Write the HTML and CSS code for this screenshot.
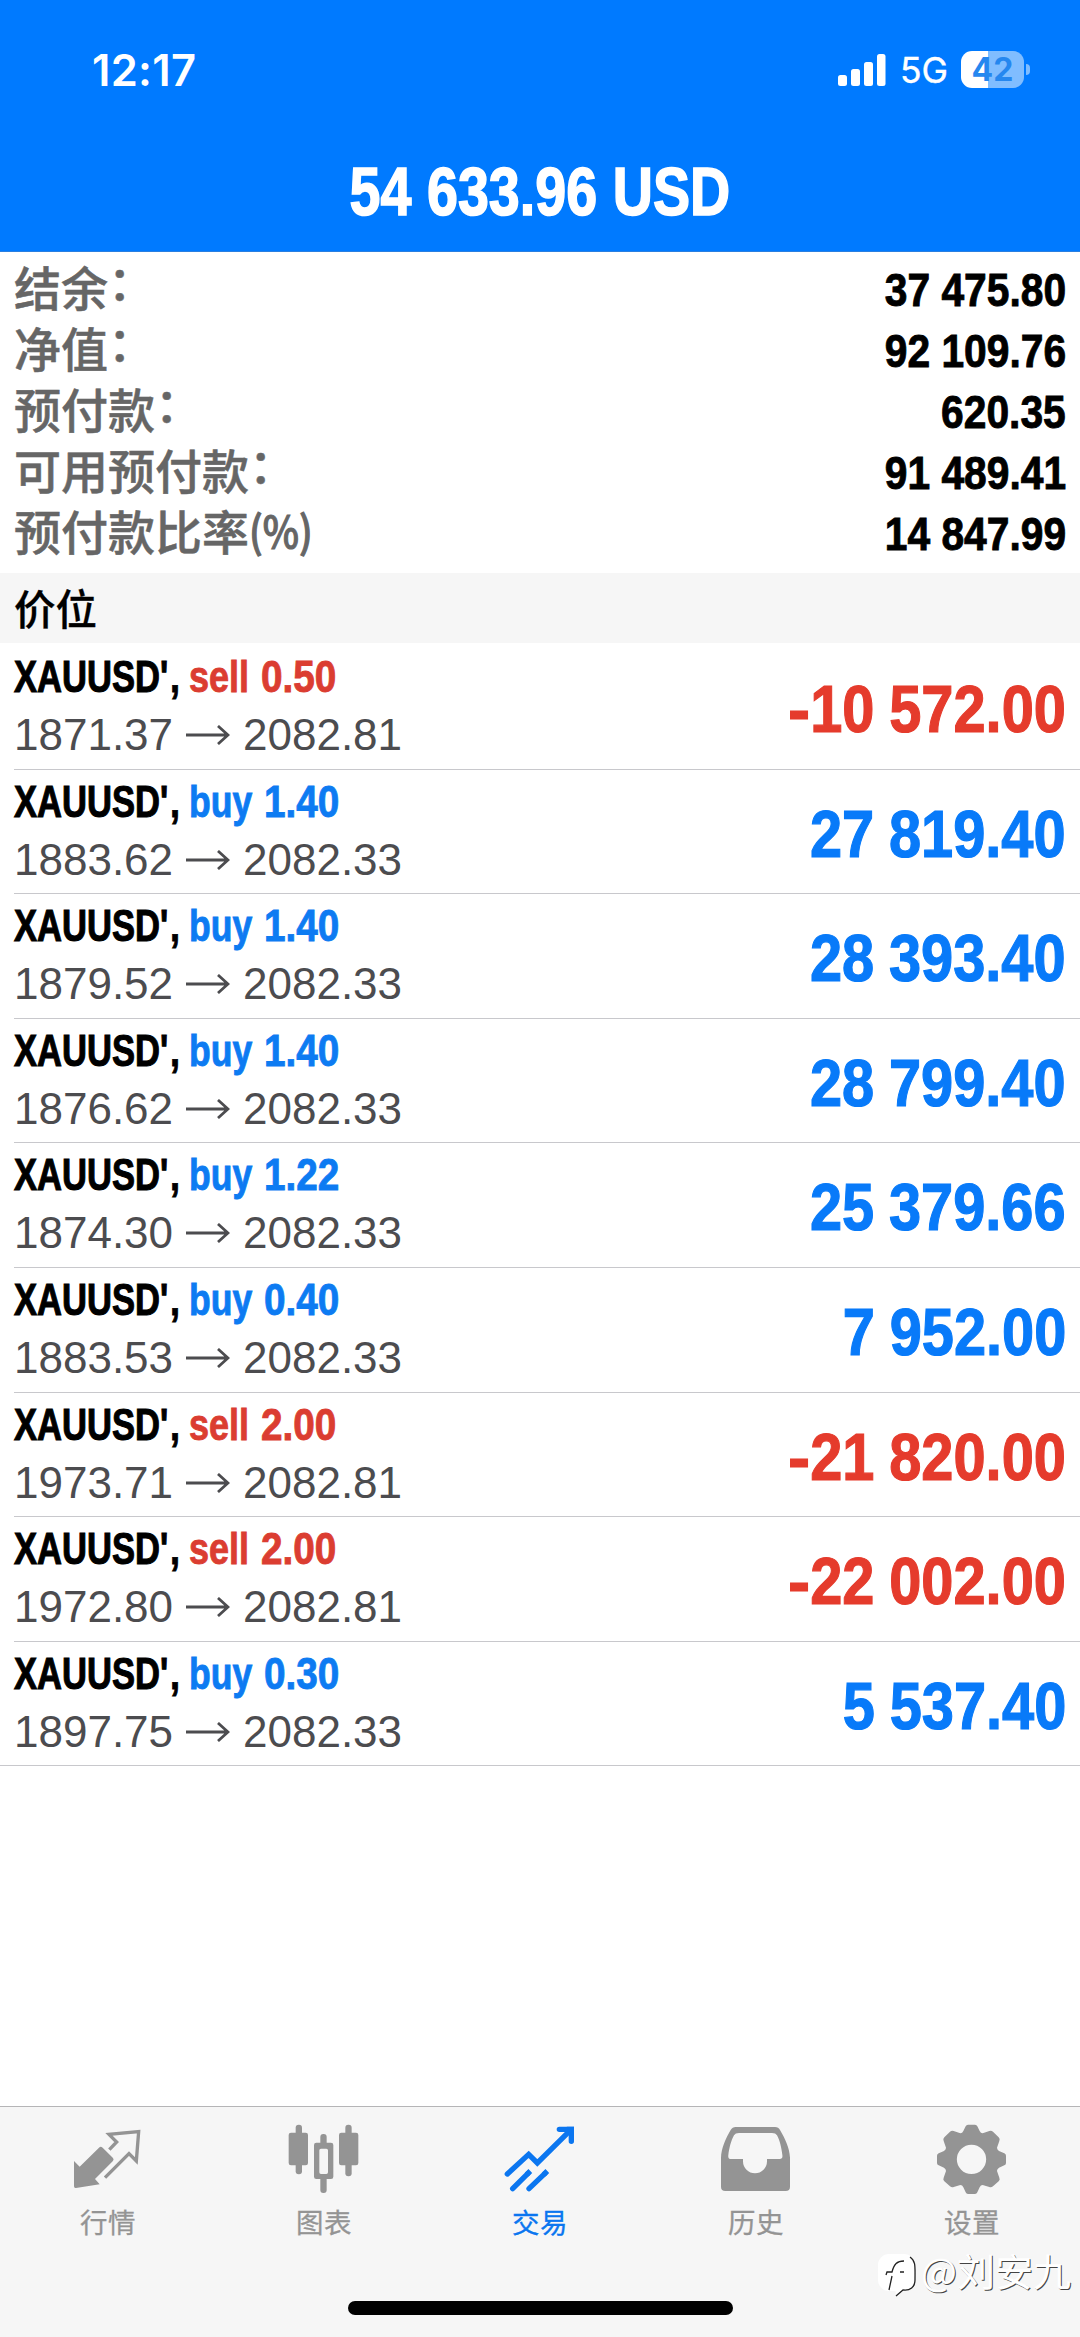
FILE: index.html
```html
<!DOCTYPE html>
<html lang="zh-CN">
<head>
<meta charset="utf-8">
<title>交易</title>
<link rel="stylesheet" href="styles.css">
</head>
<body>
<header class="top">
  <div class="status">
    <span class="time">12:17</span>
    <span class="status-icons">
      <svg class="signal" viewBox="0 0 48 34"><rect x="0" y="22" width="9" height="11" rx="2.5"/><rect x="13" y="16" width="9" height="17" rx="2.5"/><rect x="26" y="9" width="9" height="24" rx="2.5"/><rect x="39" y="1" width="8.5" height="32" rx="2.5"/></svg>
      <span class="network">5G</span>
      <span class="battery">42</span>
      <span class="battery-cap"></span>
    </span>
  </div>
  <h1 class="profit"><span>54 633.96 USD</span></h1>
</header>

<section class="summary">
  <div class="line"><span>结余<i class="colon">：</i></span><b>37 475.80</b></div>
  <div class="line"><span>净值<i class="colon">：</i></span><b>92 109.76</b></div>
  <div class="line"><span>预付款<i class="colon">：</i></span><b>620.35</b></div>
  <div class="line"><span>可用预付款<i class="colon">：</i></span><b>91 489.41</b></div>
  <div class="line"><span>预付款比率<i class="unit">(%)</i></span><b>14 847.99</b></div>
</section>

<h2 class="section">价位</h2>

<main class="positions">
  <article class="row sell"><div class="info"><div class="deal"><span class="sym">XAUUSD'</span><span class="comma">,</span><span class="side">sell</span><span class="vol">0.50</span></div><div class="prices"><span class="from">1871.37</span><svg class="arrow" viewBox="0 0 44 20"><path d="M0 10H42M32 1L42 10L32 19"/></svg><span>2082.81</span></div></div><b class="amount"><i>-</i>10 572.00</b></article>
  <article class="row buy"><div class="info"><div class="deal"><span class="sym">XAUUSD'</span><span class="comma">,</span><span class="side">buy</span><span class="vol">1.40</span></div><div class="prices"><span class="from">1883.62</span><svg class="arrow" viewBox="0 0 44 20"><path d="M0 10H42M32 1L42 10L32 19"/></svg><span>2082.33</span></div></div><b class="amount">27 819.40</b></article>
  <article class="row buy"><div class="info"><div class="deal"><span class="sym">XAUUSD'</span><span class="comma">,</span><span class="side">buy</span><span class="vol">1.40</span></div><div class="prices"><span class="from">1879.52</span><svg class="arrow" viewBox="0 0 44 20"><path d="M0 10H42M32 1L42 10L32 19"/></svg><span>2082.33</span></div></div><b class="amount">28 393.40</b></article>
  <article class="row buy"><div class="info"><div class="deal"><span class="sym">XAUUSD'</span><span class="comma">,</span><span class="side">buy</span><span class="vol">1.40</span></div><div class="prices"><span class="from">1876.62</span><svg class="arrow" viewBox="0 0 44 20"><path d="M0 10H42M32 1L42 10L32 19"/></svg><span>2082.33</span></div></div><b class="amount">28 799.40</b></article>
  <article class="row buy"><div class="info"><div class="deal"><span class="sym">XAUUSD'</span><span class="comma">,</span><span class="side">buy</span><span class="vol">1.22</span></div><div class="prices"><span class="from">1874.30</span><svg class="arrow" viewBox="0 0 44 20"><path d="M0 10H42M32 1L42 10L32 19"/></svg><span>2082.33</span></div></div><b class="amount">25 379.66</b></article>
  <article class="row buy"><div class="info"><div class="deal"><span class="sym">XAUUSD'</span><span class="comma">,</span><span class="side">buy</span><span class="vol">0.40</span></div><div class="prices"><span class="from">1883.53</span><svg class="arrow" viewBox="0 0 44 20"><path d="M0 10H42M32 1L42 10L32 19"/></svg><span>2082.33</span></div></div><b class="amount">7 952.00</b></article>
  <article class="row sell"><div class="info"><div class="deal"><span class="sym">XAUUSD'</span><span class="comma">,</span><span class="side">sell</span><span class="vol">2.00</span></div><div class="prices"><span class="from">1973.71</span><svg class="arrow" viewBox="0 0 44 20"><path d="M0 10H42M32 1L42 10L32 19"/></svg><span>2082.81</span></div></div><b class="amount"><i>-</i>21 820.00</b></article>
  <article class="row sell"><div class="info"><div class="deal"><span class="sym">XAUUSD'</span><span class="comma">,</span><span class="side">sell</span><span class="vol">2.00</span></div><div class="prices"><span class="from">1972.80</span><svg class="arrow" viewBox="0 0 44 20"><path d="M0 10H42M32 1L42 10L32 19"/></svg><span>2082.81</span></div></div><b class="amount"><i>-</i>22 002.00</b></article>
  <article class="row buy"><div class="info"><div class="deal"><span class="sym">XAUUSD'</span><span class="comma">,</span><span class="side">buy</span><span class="vol">0.30</span></div><div class="prices"><span class="from">1897.75</span><svg class="arrow" viewBox="0 0 44 20"><path d="M0 10H42M32 1L42 10L32 19"/></svg><span>2082.33</span></div></div><b class="amount">5 537.40</b></article>
</main>

<footer class="bottom">
  <nav class="tabs">
    <a class="tab"><svg viewBox="204 84 240 240"><path fill="currentColor" d="M222 213L239 230L297 173Q302 168 308 173L339 204Q343 209 338 214L285 267L299 283L228 294Q222 295 222 289Z"/><path fill="none" stroke="currentColor" stroke-width="10" d="M328 179L350 156L327 133L416 125L409 213L387 191L315 263"/></svg><span>行情</span></a>
    <a class="tab"><svg viewBox="852 84 240 240" fill="currentColor"><rect x="887" y="104" width="19" height="149" rx="9"/><rect x="866" y="128" width="58" height="98" rx="7"/><rect x="1036" y="104" width="19" height="155" rx="9"/><rect x="1017" y="128" width="58" height="98" rx="7"/><rect x="961" y="132" width="19" height="40" rx="9"/><rect x="961" y="255" width="19" height="54" rx="9"/><path fill-rule="evenodd" d="M949 158H993Q1000 158 1000 165V260Q1000 267 993 267H949Q942 267 942 260V165Q942 158 949 158ZM963 176Q958 176 958 181V247Q958 252 963 252H979Q984 252 984 247V181Q984 176 979 176Z"/></svg><span>图表</span></a>
    <a class="tab active"><svg viewBox="300 84 240 240"><g fill="none" stroke="currentColor" stroke-width="16"><path stroke-linecap="round" d="M322 252L386 193L412 219L510 122"/><path stroke-linecap="round" d="M478 118H514V154"/><path stroke-linecap="round" d="M338 296L384 250M387 296L435 250"/><path d="M380 254L391 243M431 254L442 243"/></g><path fill="currentColor" d="M500 110H522V132Z"/></svg><span>交易</span></a>
    <a class="tab"><svg viewBox="108 84 240 240"><path fill="currentColor" fill-rule="evenodd" d="M167 111H285Q296 111 300 120C315 145 329 175 330 203V290Q330 303 317 303H136Q123 303 123 290V203C124 175 137 145 152 120Q157 111 167 111ZM177 129Q166 129 162 136C154 150 147 175 145 195Q143 207 154 207H189V214A36 36 0 0 0 261 214V207H299Q309 207 307 195C305 175 299 150 291 136Q287 129 276 129Z"/></svg><span>历史</span></a>
    <a class="tab"><svg viewBox="756 84 240 240"><path fill="currentColor" fill-rule="evenodd" d="M864 104H885Q890 104 892 109L899 123Q902 130 908 130L928 123Q934 121 939 125L956 142Q961 147 958 153L951 173Q951 179 957 183L973 190Q978 192 978 197V219Q978 224 973 226L957 233Q951 237 951 243L958 263Q961 269 956 274L939 289Q934 293 928 291L908 285Q902 285 899 292L892 307Q890 312 885 312H864Q859 312 857 307L850 292Q847 285 841 285L821 291Q815 293 810 289L793 274Q788 269 791 263L798 243Q798 237 792 233L776 226Q771 224 771 219V197Q771 192 776 190L792 183Q798 179 798 173L791 153Q788 147 793 142L810 125Q815 121 821 123L841 130Q847 130 850 123L857 109Q859 104 864 104ZM874.500 164A44 44 0 1 0 874.500 252A44 44 0 1 0 874.500 164Z"/></svg><span>设置</span></a>
  </nav>
  <div class="home"></div>
  <div class="watermark">
    <svg viewBox="0 0 40 46"><rect x="1" y="1" width="37" height="37" rx="11" fill="#fff"/><path fill="#fff" d="M18 34L33 34L19 43Z"/><path fill="none" stroke="#222" stroke-width="1.300" d="M9 22L10 19H15C17 11 20 8 27 8M23 19H27M15 23L12 37M33 4C39 8 38 14 38 27C38 34 33 38 26 37L19 43"/></svg>
    <span>@刘安九</span>
  </div>
</footer>
</body>
</html>
```
FILE: styles.css
```css
* { box-sizing: border-box; }
body {
  margin: 0;
  width: 1080px;
  height: 2337px;
  display: flex;
  flex-direction: column;
  overflow: hidden;
  background: #fff;
  color: #000;
  font-family: "Liberation Sans", "Noto Sans CJK SC", sans-serif;
  font-kerning: none;
}
span, b { white-space: nowrap; }
i { font-style: normal; }

/* header */
.top {
  height: 252px;
  flex: none;
  background: #007aff;
  color: #fff;
  border-bottom: 1px solid #2a7fe0;
}
.status {
  height: 139px;
  padding: 0 50px 0 92px;
  display: flex;
  align-items: center;
  justify-content: space-between;
  font-family: Inter, sans-serif;
}
.time { font-size: 43.5px; font-weight: 600; letter-spacing: .3px; }
.status-icons { display: flex; align-items: center; }
.signal { width: 48px; height: 34px; fill: #fff; margin-right: 14px; }
.network { font-size: 35.5px; width: 61px; padding-top: 2px; -webkit-text-stroke: .4px; }
.battery {
  width: 63px;
  height: 37px;
  border-radius: 11px;
  background: linear-gradient(90deg, #fff 27px, #80bdff 27px);
  color: #2587ef;
  font-size: 32px;
  font-weight: 700;
  line-height: 37px;
  text-align: center;
}
.battery-cap { width: 4px; height: 11px; margin-left: 2px; border-radius: 0 5px 5px 0; background: #80bdff; }
.profit {
  margin: 0;
  height: 110px;
  line-height: 106px;
  font-size: 69px;
  text-align: center;
}
.profit span { display: inline-block; transform: scaleX(.807); -webkit-text-stroke: 1.6px; }

/* account summary */
.summary { height: 321px; padding: 7px 14px 0; flex: none; }
.line {
  height: 61px;
  line-height: 61px;
  display: flex;
  justify-content: space-between;
  font-size: 47px;
}
.line span {
  margin-top: -4px;
  color: #666;
  font-family: "Noto Sans CJK SC", sans-serif;
  font-weight: 500;
  -webkit-text-stroke: .5px;
}
.colon { display: inline-block; transform: translateY(-6px); }
.unit { display: inline-block; transform: scaleX(.82) scaleY(.92); transform-origin: left; -webkit-text-stroke: 1.2px; }
.line b { transform: scaleX(.867); transform-origin: right; -webkit-text-stroke: .9px; }
.section {
  margin: 0;
  height: 70px;
  flex: none;
  padding-left: 14px;
  background: #f6f6f6;
  font: 500 41.5px/68px "Noto Sans CJK SC", sans-serif;
  -webkit-text-stroke: .3px;
}

/* open positions */
.positions { padding-top: 2px; flex: 1; }
.row {
  height: 124.600px;
  margin-left: 14px;
  padding-right: 14px;
  display: flex;
  justify-content: space-between;
  border-bottom: 1px solid #c8c8cc;
}
.row:last-child { margin-left: 0; padding-left: 14px; }
.deal {
  display: flex;
  height: 63px;
  line-height: 64px;
  font-size: 45px;
  font-weight: 700;
  -webkit-text-stroke: .9px;
}
.deal span { transform-origin: left; }
.sym { width: 156px; transform: scaleX(.768); -webkit-text-stroke: 1.1px; }
.comma { width: 19px; transform: scaleX(.8); }
.side { width: 72px; transform: scaleX(.8); }
.buy .side { width: 75px; transform: scaleX(.79); }
.vol { transform: scaleX(.86); }
.sell .side, .sell .vol { color: #db3d31; }
.buy .side, .buy .vol { color: #0d7bf2; }
.prices {
  display: flex;
  align-items: center;
  height: 54px;
  font-size: 44px;
  line-height: 54px;
  color: #4c4c4f;
}
.from { width: 172px; }
.arrow { width: 44px; height: 20px; margin-right: 13px; fill: none; stroke: #4c4c4f; stroke-width: 2.800; }
.amount {
  font-size: 67px;
  line-height: 127px;
  word-spacing: -1.5px;
  transform: scaleX(.862);
  transform-origin: right;
  -webkit-text-stroke: 1.2px;
}
.amount i { display: inline-block; transform: scaleX(1.15); transform-origin: right; }
.sell .amount { color: #e53b2c; }
.buy .amount { color: #087af9; }

/* tab bar */
.bottom {
  position: relative;
  height: 231px;
  flex: none;
  background: #f6f6f6;
  border-top: 1px solid #b5b5b7;
  display: flex;
  flex-direction: column;
  align-items: center;
}
.tabs { width: 100%; height: 194px; display: flex; }
.tab {
  flex: 1;
  padding-top: 11px;
  display: flex;
  flex-direction: column;
  align-items: center;
  color: #949494;
  font: 400 27.500px/40px "Noto Sans CJK SC", sans-serif;
}
.tab span { margin-top: 3px; letter-spacing: .6px; -webkit-text-stroke: .3px; }
.tab svg { width: 80px; height: 80px; display: block; }
.tab.active { color: #0b76f0; }
.home { width: 385px; height: 14px; border-radius: 7px; background: #000; }
.watermark {
  position: absolute;
  right: 9px;
  top: 134px;
  display: flex;
  align-items: center;
  gap: 4px;
  color: #fff;
  font: 400 38px/52px "Noto Sans CJK SC", sans-serif;
  text-shadow: 1px 1px 0 #444;
}
.watermark svg { width: 40px; height: 46px; margin-top: 12px; }
```
